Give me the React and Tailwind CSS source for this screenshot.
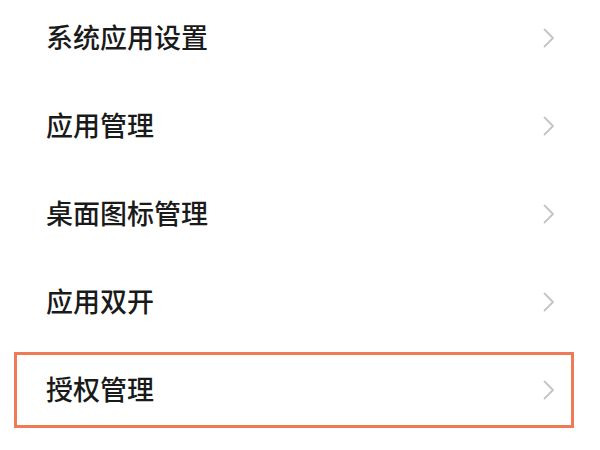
const items = [
  { label: '系统应用设置' },
  { label: '应用管理' },
  { label: '桌面图标管理' },
  { label: '应用双开' },
  { label: '授权管理', active: true },
];

function Chevron() {
  return (
    <svg width="12" height="20" viewBox="0 0 12 20" fill="none">
      <path d="M1.5 1.5 L10 10 L1.5 18.5" stroke="#c4c4c4" strokeWidth="1.8" strokeLinecap="round" strokeLinejoin="round" />
    </svg>
  );
}

export default function App() {
  return (
    <div
      className="w-[600px] h-[450px] overflow-hidden bg-white pl-[14px] pr-[26px] flex flex-col gap-3"
      style={{ fontFamily: '"Noto Sans CJK SC", "Noto Sans", sans-serif' }}
    >
      {items.map((item) => (
        <div
          key={item.label}
          className={`h-[76px] shrink-0 flex items-center justify-between pl-[29px] pr-[16px] border-[3px] ${
            item.active ? 'border-[#ef7a55]' : 'border-transparent'
          }`}
        >
          <span className="text-[27px] font-medium text-[#1a1a1a] leading-none -mt-[3px]">{item.label}</span>
          <Chevron />
        </div>
      ))}
    </div>
  );
}
